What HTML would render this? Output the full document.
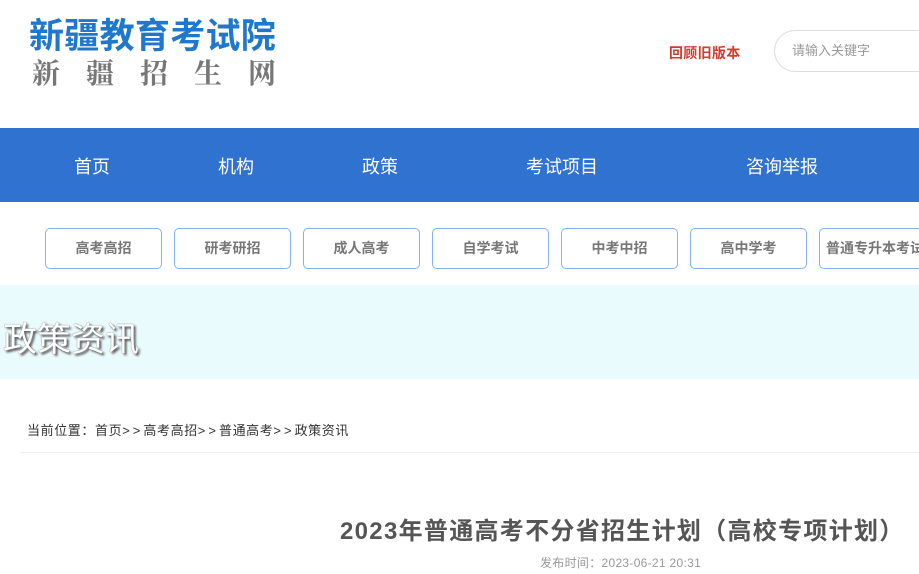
<!DOCTYPE html>
<html><head><meta charset="utf-8"><style>
*{margin:0;padding:0;box-sizing:border-box}
body{width:919px;height:574px;overflow:hidden;background:#fff;font-family:"Liberation Sans","Noto Sans CJK SC",sans-serif;position:relative}
.a{position:absolute;white-space:nowrap}
.nav{position:absolute;left:0;top:128px;width:919px;height:74px;background:#3072d0}
.nav span{position:absolute;top:25px;color:#fff;font-size:18px;transform:translateX(-50%)}
.btn{position:absolute;top:228px;width:117px;height:41px;border:1px solid #86b1ec;border-radius:5px;text-align:center;line-height:39px;font-size:14px;font-weight:bold;color:#777}
</style></head><body>
<div class="a" style="left:29px;top:8px;font-size:35px;font-weight:bold;color:#1f78cc;letter-spacing:0.3px">新疆教育考试院</div>
<div class="a" style="left:32px;top:52px;font-size:28px;color:#777;letter-spacing:26px;font-family:'Noto Serif CJK SC',serif;font-weight:bold">新疆招生网</div>
<div class="a" style="left:669px;top:43px;font-size:14px;color:#d43b2a;font-weight:bold;letter-spacing:0.3px">回顾旧版本</div>
<div class="a" style="left:774px;top:30px;width:170px;height:42px;border:1px solid #ddd;border-radius:21px;padding-left:17px;line-height:40px;font-size:13px;color:#999">请输入关键字</div>
<div class="nav">
<span style="left:92px">首页</span><span style="left:236px">机构</span><span style="left:380px">政策</span><span style="left:562px">考试项目</span><span style="left:782px">咨询举报</span>
</div>
<div class="btn" style="left:45px">高考高招</div>
<div class="btn" style="left:174px">研考研招</div>
<div class="btn" style="left:303px">成人高考</div>
<div class="btn" style="left:432px">自学考试</div>
<div class="btn" style="left:561px">中考中招</div>
<div class="btn" style="left:690px">高中学考</div>
<div class="btn" style="left:819px;width:130px;text-align:left;padding-left:6px">普通专升本考试</div>
<div class="a" style="left:0;top:285px;width:919px;height:94px;background:#eafbfe"></div>
<div class="a" style="left:3px;top:312px;font-size:34px;color:#fff;text-shadow:2px 2px 2px #555,0 0 1px #333">政策资讯</div>
<div class="a" style="left:27px;top:420px;font-size:13px;color:#333;letter-spacing:0.6px">当前位置：首页<span style="letter-spacing:3px">&gt;&gt;</span>高考高招<span style="letter-spacing:3px">&gt;&gt;</span>普通高考<span style="letter-spacing:3px">&gt;&gt;</span>政策资讯</div>
<div class="a" style="left:20px;top:452px;width:899px;height:1px;background:#eee"></div>
<div class="a" style="left:340px;top:511px;font-size:24px;font-weight:bold;color:#555;letter-spacing:1.3px">2023年普通高考不分省招生计划（高校专项计划）</div>
<div class="a" style="left:540px;top:554px;font-size:12px;color:#999;letter-spacing:0.3px">发布时间：2023-06-21 20:31</div>
</body></html>
